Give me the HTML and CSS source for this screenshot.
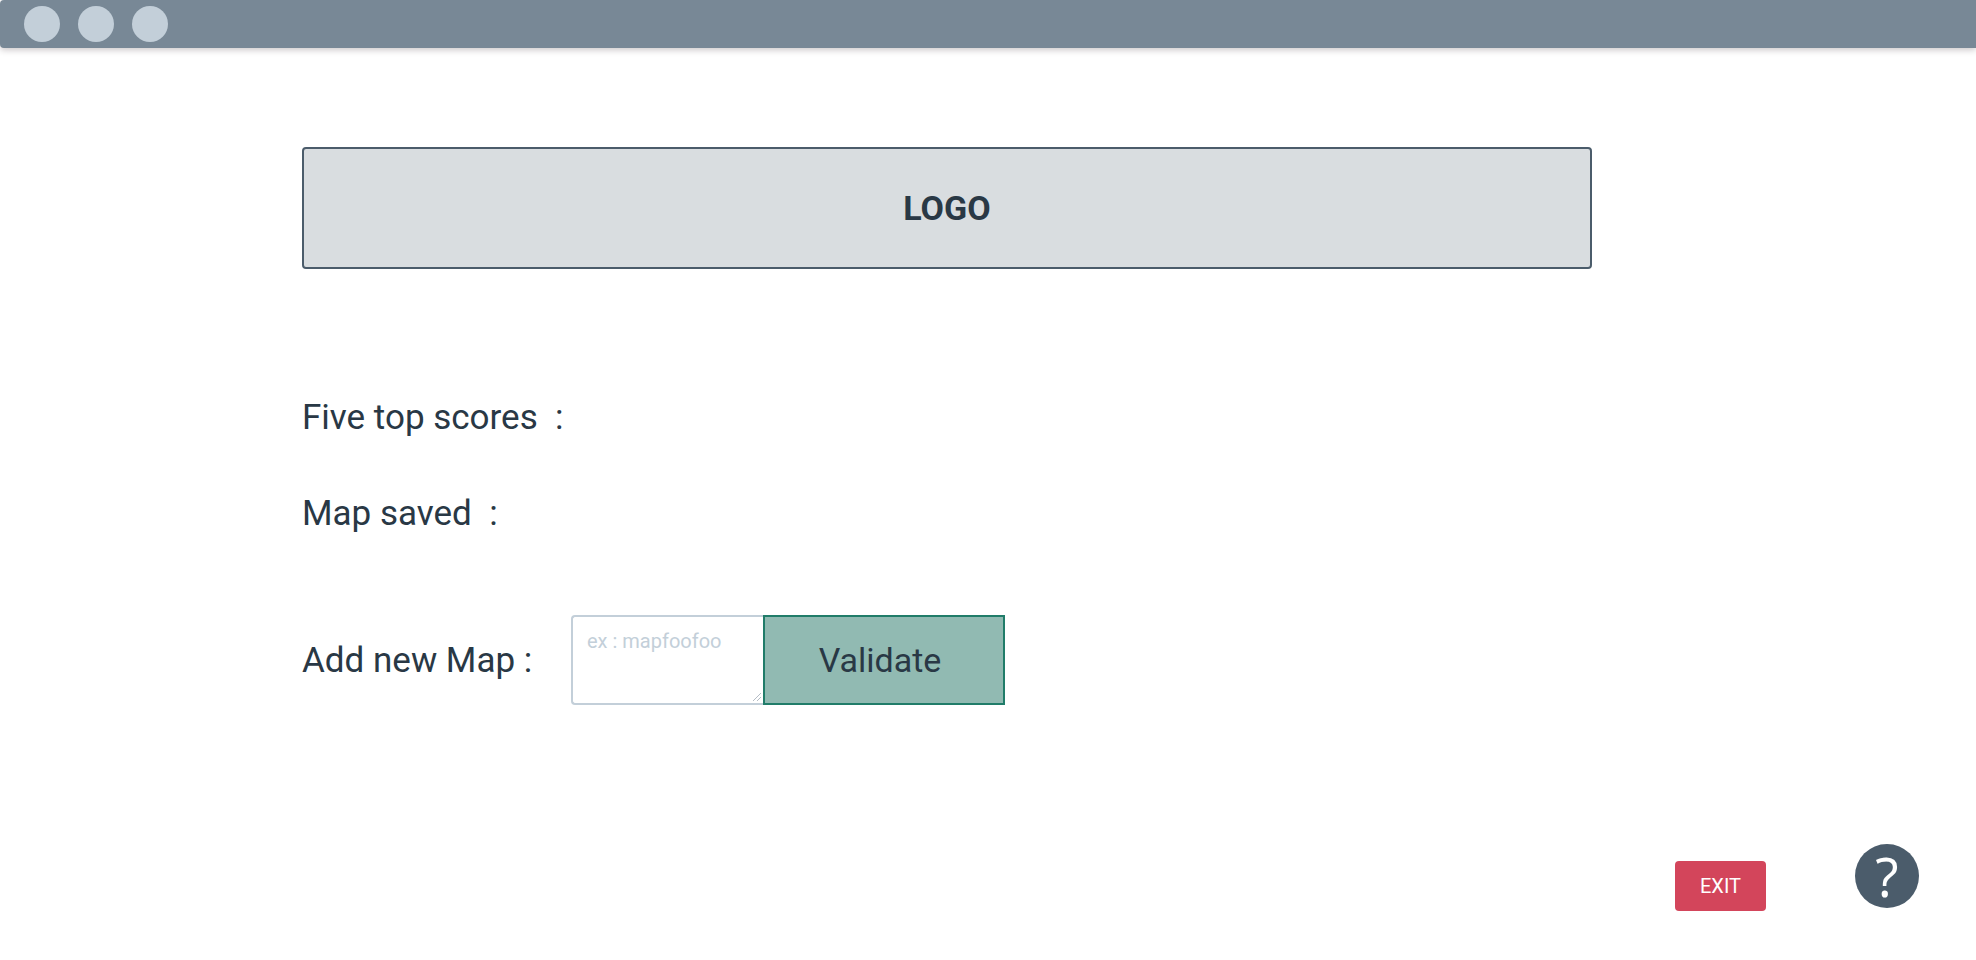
FILE: index.html
```html
<!DOCTYPE html>
<html lang="en">
<head>
<meta charset="utf-8">
<title>Map menu</title>
<meta name="viewport" content="width=device-width, initial-scale=1">
<link rel="stylesheet" href="styles.css">
</head>
<body>
<header class="titlebar">
  <span class="dot"></span>
  <span class="dot"></span>
  <span class="dot"></span>
</header>
<main class="content">
  <h1 class="logo">LOGO</h1>
  <p class="label scores">Five top scores  :</p>
  <p class="label saved">Map saved  :</p>
  <form class="add-map">
    <label class="label add-label" for="map-name">Add new Map :</label>
    <div class="field">
      <textarea id="map-name" class="map-input" placeholder="ex : mapfoofoo"></textarea>
      <svg class="grip" viewBox="0 0 10 10" aria-hidden="true"><path d="M1 9 9 1M5 9 9 5"/></svg>
    </div>
    <button class="validate" type="button">Validate</button>
  </form>
</main>
<footer class="actions">
  <button class="exit" type="button">EXIT</button>
  <button class="help" type="button" aria-label="Help">?</button>
</footer>
</body>
</html>
```
FILE: styles.css
```css
* {
  box-sizing: border-box;
}

body {
  margin: 0;
  background: #fff;
  color: #293845;
  font-family: Roboto, "Liberation Sans", sans-serif;
}

.titlebar {
  display: flex;
  align-items: center;
  gap: 18px;
  height: 48px;
  padding: 0 24px;
  background: #788896;
  border-radius: 4px 0 0 4px;
  box-shadow: 0 2px 6px rgba(50, 30, 40, 0.25);
}

.dot {
  width: 36px;
  height: 36px;
  border-radius: 50%;
  background: #c3cfd9;
}

.content {
  padding: 99px 384px 0 302px;
}

.logo {
  display: flex;
  align-items: center;
  justify-content: center;
  height: 122px;
  margin: 0;
  border: 2px solid #4b5c6b;
  border-radius: 4px;
  background: #d9dde0;
  font-size: 34px;
  font-weight: 700;
}

.label {
  margin: 0;
  padding-top: 2px;
  font-size: 35px;
  line-height: 48px;
  white-space: pre;
}

.scores {
  margin-top: 123px;
}

.saved {
  margin-top: 46px;
}

.add-map {
  display: flex;
  align-items: center;
  margin-top: 77px;
}

.add-label {
  flex: none;
  width: 269px;
}

.field {
  position: relative;
  width: 192px;
  height: 90px;
}

.map-input {
  display: block;
  width: 100%;
  height: 100%;
  padding: 10px 14px;
  border: 2px solid #c3cfd9;
  border-right: 0;
  border-radius: 4px 0 0 4px;
  background: #fff;
  color: #293845;
  font-family: inherit;
  font-size: 20px;
  line-height: 28px;
  resize: none;
}

.map-input::placeholder {
  color: #c3cfd9;
}

.grip {
  position: absolute;
  right: 1px;
  bottom: 3px;
  width: 10px;
  height: 10px;
  fill: none;
  stroke: #b5bdc6;
}

.validate {
  width: 242px;
  height: 90px;
  padding: 0 8px 0 0;
  border: 2px solid #207c69;
  background: #91bab2;
  color: #293845;
  font-family: inherit;
  font-size: 34px;
}

.actions {
  display: flex;
  justify-content: flex-end;
  align-items: flex-start;
  gap: 89px;
  padding: 139px 57px 32px;
}

.exit {
  width: 91px;
  height: 50px;
  margin-top: 17px;
  padding: 0;
  border: 0;
  border-radius: 4px;
  background: #d3455b;
  color: #fff;
  font-family: inherit;
  font-size: 20px;
}

.help {
  width: 64px;
  height: 64px;
  padding: 0;
  border: 0;
  border-radius: 50%;
  background: #4b5c6b;
  color: #fff;
  font-family: "Open Sans", sans-serif;
  font-size: 54px;
  line-height: 64px;
}
```
